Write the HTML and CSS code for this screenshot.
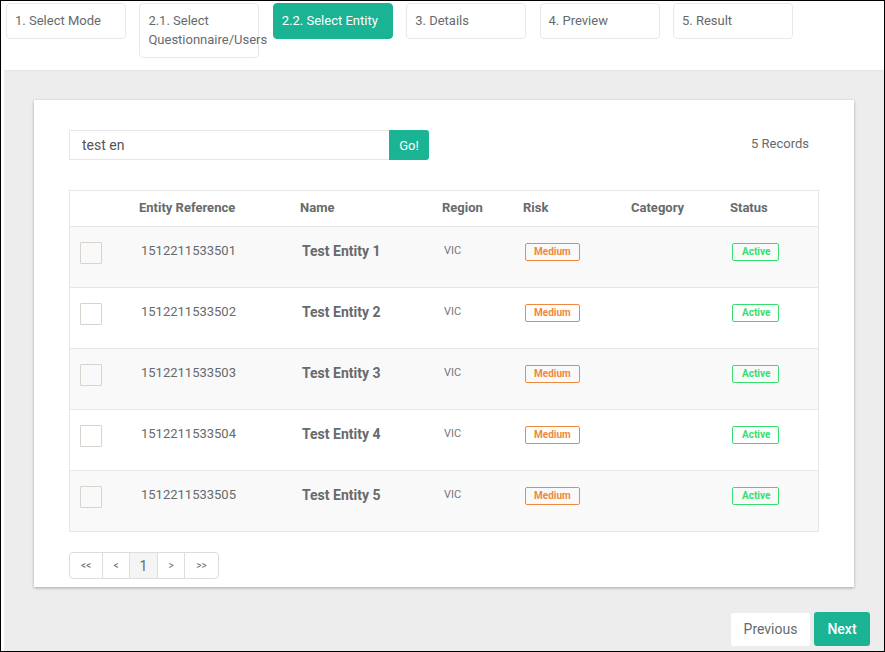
FILE: index.html
```html
<!DOCTYPE html>
<html>
<head>
<meta charset="utf-8">
<link rel="stylesheet" href="styles.css">
</head>
<body>
<div class="frame">
  <div class="steps">
    <div class="step">1. Select Mode</div>
    <div class="step">2.1. Select Questionnaire/Users</div>
    <div class="step active">2.2. Select Entity</div>
    <div class="step">3. Details</div>
    <div class="step">4. Preview</div>
    <div class="step">5. Result</div>
  </div>
  <div class="content">
    <div class="card">
      <div class="search-row">
        <div class="input-group">
          <input class="search-input" type="text" value="test en">
          <button class="go-btn">Go!</button>
        </div>
        <div class="records">5 Records</div>
      </div>
      <table class="grid">
        <colgroup>
          <col style="width:61px"><col style="width:161px"><col style="width:142px"><col style="width:81px"><col style="width:108px"><col style="width:99px"><col style="width:96px">
        </colgroup>
        <thead>
          <tr><th></th><th>Entity Reference</th><th>Name</th><th>Region</th><th>Risk</th><th>Category</th><th>Status</th></tr>
        </thead>
        <tbody>
          <tr>
            <td><div class="cell"><span class="check"></span></div></td>
            <td><div class="cell ref">1512211533501</div></td>
            <td><div class="cell name">Test Entity 1</div></td>
            <td><div class="cell region">VIC</div></td>
            <td><div class="cell"><span class="badge medium">Medium</span></div></td>
            <td><div class="cell"></div></td>
            <td><div class="cell"><span class="badge active-b">Active</span></div></td>
          </tr>
          <tr>
            <td><div class="cell"><span class="check"></span></div></td>
            <td><div class="cell ref">1512211533502</div></td>
            <td><div class="cell name">Test Entity 2</div></td>
            <td><div class="cell region">VIC</div></td>
            <td><div class="cell"><span class="badge medium">Medium</span></div></td>
            <td><div class="cell"></div></td>
            <td><div class="cell"><span class="badge active-b">Active</span></div></td>
          </tr>
          <tr>
            <td><div class="cell"><span class="check"></span></div></td>
            <td><div class="cell ref">1512211533503</div></td>
            <td><div class="cell name">Test Entity 3</div></td>
            <td><div class="cell region">VIC</div></td>
            <td><div class="cell"><span class="badge medium">Medium</span></div></td>
            <td><div class="cell"></div></td>
            <td><div class="cell"><span class="badge active-b">Active</span></div></td>
          </tr>
          <tr>
            <td><div class="cell"><span class="check"></span></div></td>
            <td><div class="cell ref">1512211533504</div></td>
            <td><div class="cell name">Test Entity 4</div></td>
            <td><div class="cell region">VIC</div></td>
            <td><div class="cell"><span class="badge medium">Medium</span></div></td>
            <td><div class="cell"></div></td>
            <td><div class="cell"><span class="badge active-b">Active</span></div></td>
          </tr>
          <tr>
            <td><div class="cell"><span class="check"></span></div></td>
            <td><div class="cell ref">1512211533505</div></td>
            <td><div class="cell name">Test Entity 5</div></td>
            <td><div class="cell region">VIC</div></td>
            <td><div class="cell"><span class="badge medium">Medium</span></div></td>
            <td><div class="cell"></div></td>
            <td><div class="cell"><span class="badge active-b">Active</span></div></td>
          </tr>
        </tbody>
      </table>
      <div class="pager">
        <span class="pg pg-first">&lt;&lt;</span>
        <span class="pg pg-prev">&lt;</span>
        <span class="pg pg-cur">1</span>
        <span class="pg pg-next">&gt;</span>
        <span class="pg pg-last">&gt;&gt;</span>
      </div>
    </div>
    <div class="actions">
      <button class="btn btn-prev">Previous</button>
      <button class="btn btn-next">Next</button>
    </div>
  </div>
</div>
</body>
</html>
```

FILE: styles.css
```css
* { box-sizing: border-box; }
html, body { margin: 0; padding: 0; background: #fff; }
body { font-family: Roboto, "Liberation Sans", Arial, sans-serif; color: #676a6c; font-size: 13px; }

.frame {
  width: 885px;
  height: 652px;
  border: 1px solid #000;
  display: flex;
  flex-direction: column;
  overflow: hidden;
  background: #fff;
}

.steps {
  height: 69px;
  flex: none;
  display: flex;
  align-items: flex-start;
  gap: 13.4px;
  padding: 2px 0 0 5px;
}
.step {
  width: 120px;
  flex: none;
  border: 1px solid #e7eaec;
  border-radius: 4px;
  padding: 7px 8px 8px;
  line-height: 19px;
  font-size: 13px;
  color: #676a6c;
  background: #fff;
}
.step.active {
  background: #1ab394;
  border-color: #1ab394;
  color: #fff;
}

.content {
  flex: 1;
  margin-left: 3px;
  background: #ededed;
  padding: 30px 0 0 30px;
  box-shadow: inset 0 1px 0 #e6e6e6;
}

.card {
  width: 820px;
  background: #fff;
  padding: 30px 35px 8px;
  box-shadow: 0 1px 3px rgba(0,0,0,0.3);
}

.search-row {
  display: flex;
  align-items: center;
  justify-content: space-between;
  height: 30px;
}
.input-group { display: flex; }
.search-input {
  width: 320px;
  height: 30px;
  border: 1px solid #e5e6e7;
  border-right: none;
  padding: 0 12px;
  font-family: Roboto, "Liberation Sans", Arial, sans-serif;
  font-size: 14px;
  color: #555;
  outline: none;
}
.go-btn {
  width: 40px;
  height: 30px;
  border: none;
  background: #1ab394;
  color: #fff;
  font-family: Roboto, "Liberation Sans", Arial, sans-serif;
  font-size: 13px;
  border-radius: 0 3px 3px 0;
  padding: 0;
}
.records { padding-right: 10px; margin-bottom: 3px; font-size: 13px; color: #676a6c; }

.grid {
  margin-top: 30px;
  width: 750px;
  table-layout: fixed;
  border-collapse: separate;
  border-spacing: 0;
  border: 1px solid #e7e7e7;
}
.grid th {
  height: 36px;
  padding: 0 8px 2px;
  text-align: left;
  font-weight: bold;
  font-size: 13px;
  color: #676a6c;
  border-bottom: 1px solid #e7e7e7;
  vertical-align: middle;
}
.grid td {
  padding: 0 10px;
  vertical-align: top;
}
.grid tbody tr + tr td { border-top: 1px solid #e7e7e7; }
.grid tbody tr:nth-child(odd) td { background: #f9f9f9; }
.cell {
  height: 60px;
  padding-top: 15px;
  line-height: 18px;
  white-space: nowrap;
}
.ref { font-size: 13px; color: #676a6c; }
.name { font-size: 14px; font-weight: bold; color: #676a6c; }
.region { font-size: 11px; color: #777; }
.check {
  display: block;
  width: 22px;
  height: 22px;
  border: 1px solid #d8d3cd;
  border-radius: 1px;
}
.badge {
  display: inline-block;
  margin-top: 1px;
  line-height: 16px;
  padding: 0 8px;
  border: 1px solid;
  border-radius: 2px;
  font-size: 10px;
  font-weight: bold;
  vertical-align: top;
}
.badge.medium { color: #f0883e; border-color: #f0883e; }
.badge.active-b { color: #34df6e; border-color: #34df6e; padding: 0 8px 0 9px; }

.pager {
  margin-top: 20px;
  display: flex;
}
.pg {
  height: 27px;
  border: 1px solid #dddddd;
  margin-left: -1px;
  display: flex;
  align-items: center;
  justify-content: center;
  font-size: 10px;
  color: #676a6c;
  background: #fff;
}
.pg-first { margin-left: 0; width: 34px; border-radius: 4px 0 0 4px; }
.pg-prev { width: 28px; }
.pg-cur { width: 29px; font-size: 14px; background: #f4f4f4; }
.pg-next { width: 28px; }
.pg-last { width: 35px; border-radius: 0 4px 4px 0; }

.actions {
  display: flex;
  justify-content: flex-end;
  align-items: center;
  gap: 4px;
  margin-top: 25px;
  padding-right: 14px;
}
.btn {
  border: none;
  border-radius: 3px;
  font-family: Roboto, "Liberation Sans", Arial, sans-serif;
  font-size: 14px;
  padding: 0;
}
.btn-prev {
  width: 79px;
  height: 33px;
  background: #fff;
  color: #676a6c;
}
.btn-next {
  width: 56px;
  height: 34px;
  background: #1ab394;
  color: #fff;
  font-weight: 500;
}
```
